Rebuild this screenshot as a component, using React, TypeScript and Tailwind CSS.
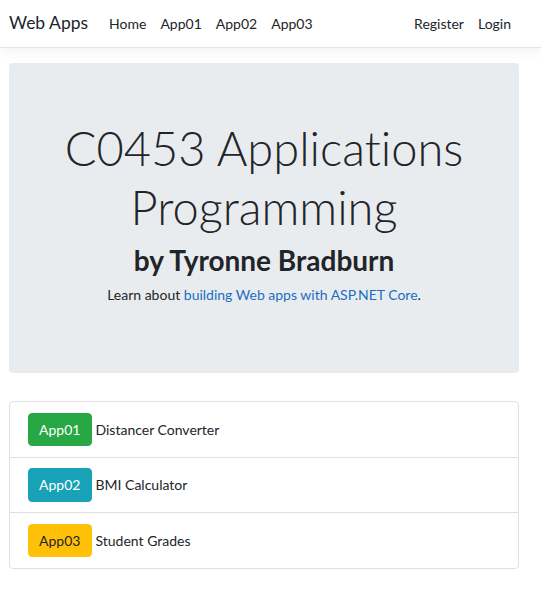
import React from "react";

const apps = [
  { id: "App01", label: "Distancer Converter", cls: "bg-[#28a745] border-[#28a745] text-white" },
  { id: "App02", label: "BMI Calculator", cls: "bg-[#17a2b8] border-[#17a2b8] text-white" },
  { id: "App03", label: "Student Grades", cls: "bg-[#ffc107] border-[#ffc107] text-[#212529]" },
];

export default function App() {
  return (
    <div className="min-h-[591px] bg-white text-[14px] leading-[1.5] text-[#212529] font-['Segoe_UI','Lato',sans-serif] [font-variant-ligatures:none]">
      {/* Navbar */}
      <header className="h-[48px] flex items-center border-b border-[#e5e5e5] shadow-[0_3.5px_10.5px_rgba(0,0,0,0.05)] mb-[15px]">
        <nav className="w-full flex items-center pl-[9px] pr-[23px]">
          <a className="text-[17.5px] mr-[14px] py-[4px] whitespace-nowrap">Web Apps</a>
          <ul className="flex flex-1">
            {["Home", "App01", "App02", "App03"].map((t) => (
              <li key={t}>
                <a className="block px-[7px] py-[7px] text-[#212529]">{t}</a>
              </li>
            ))}
          </ul>
          <ul className="flex">
            {["Register", "Login"].map((t) => (
              <li key={t}>
                <a className="block px-[7px] py-[7px] text-[#212529]">{t}</a>
              </li>
            ))}
          </ul>
        </nav>
      </header>

      <main className="ml-[9px] w-[510px]">
        {/* Jumbotron */}
        <section className="bg-[#e9ecef] rounded-[4px] px-[28px] pt-[56px] pb-[54px] mb-[28px] text-center">
          <h1 className="text-[47px] font-light leading-[58.8px] mb-[7px]">C0453 Applications Programming</h1>
          <h2 className="text-[28px] font-bold leading-[1.2] mb-[7px]">by Tyronne Bradburn</h2>
          <p className="mb-[14px]">
            Learn about <a className="text-[#1b6ec2]">building Web apps with ASP.NET Core</a>.
          </p>
        </section>

        {/* App list */}
        <ul className="border border-[#dfdfdf] rounded-[4px]">
          {apps.map((a, i) => (
            <li
              key={a.id}
              className={`px-[17.5px] py-[10.5px] ${i > 0 ? "border-t border-[#dfdfdf]" : ""}`}
            >
              <a className={`inline-block border rounded-[4px] px-[10.5px] py-[5.25px] leading-[1.5] ${a.cls}`}>
                {a.id}
              </a>{" "}
              {a.label}
            </li>
          ))}
        </ul>
      </main>
    </div>
  );
}
